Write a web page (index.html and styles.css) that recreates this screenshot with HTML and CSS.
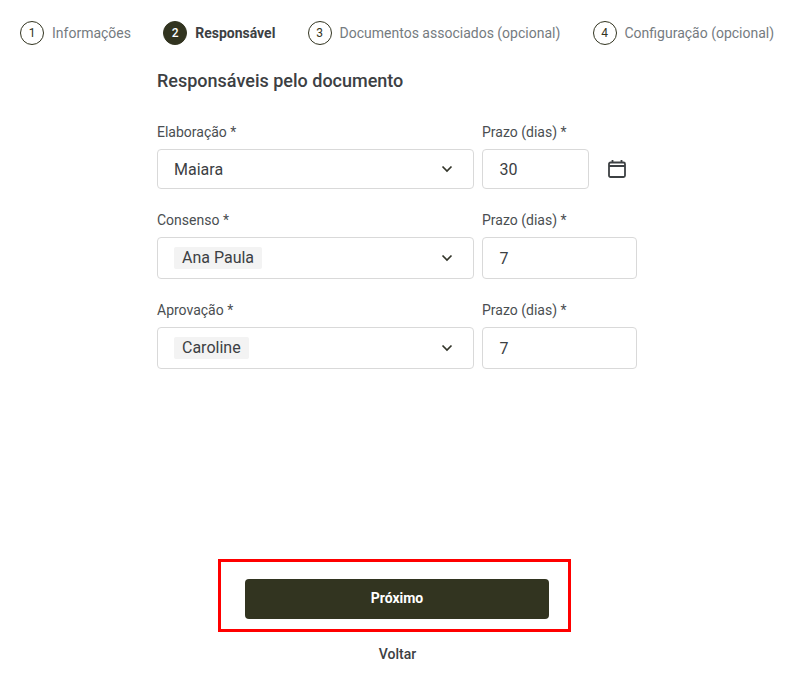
FILE: index.html
```html
<!DOCTYPE html>
<html lang="pt">
<head>
<meta charset="utf-8">
<title>Responsáveis pelo documento</title>
<link rel="stylesheet" href="styles.css">
</head>
<body>
<nav class="stepper">
  <div class="step"><span class="step-num">1</span><span class="step-label">Informações</span></div>
  <div class="step step-active"><span class="step-num">2</span><span class="step-label">Responsável</span></div>
  <div class="step"><span class="step-num">3</span><span class="step-label">Documentos associados (opcional)</span></div>
  <div class="step"><span class="step-num">4</span><span class="step-label">Configuração (opcional)</span></div>
</nav>
<main class="content">
  <h1 class="title">Responsáveis pelo documento</h1>
  <div class="row">
    <div class="col-select">
      <label class="label">Elaboração *</label>
      <div class="field field-select"><span class="value">Maiara</span>
        <svg class="chevron" viewBox="0 0 12 8" width="12" height="8"><path d="M1.5 1.5 6 6l4.5-4.5" fill="none" stroke="#33352a" stroke-width="1.7"/></svg>
      </div>
    </div>
    <div class="col-prazo">
      <label class="label">Prazo (dias) *</label>
      <div class="prazo-line">
        <div class="field field-short"><span class="value">30</span></div>
        <svg class="calendar" viewBox="0 0 18 18" width="18" height="18"><path d="M1 4A1.500 1.500 0 0 1 2.500 2.500h13A1.500 1.500 0 0 1 17 4v11.500a1.500 1.500 0 0 1-1.500 1.500h-13A1.500 1.500 0 0 1 1 15.500zM1 6h16M4.500 0v2.500M13.500 0v2.500" fill="none" stroke="#3c4043" stroke-width="1.800"/></svg>
      </div>
    </div>
  </div>
  <div class="row">
    <div class="col-select">
      <label class="label">Consenso *</label>
      <div class="field field-select field-tall"><span class="tag">Ana Paula</span>
        <svg class="chevron" viewBox="0 0 12 8" width="12" height="8"><path d="M1.5 1.5 6 6l4.5-4.5" fill="none" stroke="#33352a" stroke-width="1.7"/></svg>
      </div>
    </div>
    <div class="col-prazo">
      <label class="label">Prazo (dias) *</label>
      <div class="field field-tall field-num"><span class="value">7</span></div>
    </div>
  </div>
  <div class="row">
    <div class="col-select">
      <label class="label">Aprovação *</label>
      <div class="field field-select field-tall"><span class="tag">Caroline</span>
        <svg class="chevron" viewBox="0 0 12 8" width="12" height="8"><path d="M1.5 1.5 6 6l4.5-4.5" fill="none" stroke="#33352a" stroke-width="1.7"/></svg>
      </div>
    </div>
    <div class="col-prazo">
      <label class="label">Prazo (dias) *</label>
      <div class="field field-tall field-num"><span class="value">7</span></div>
    </div>
  </div>
</main>
<footer class="actions">
  <div class="highlight"><button class="btn-next" type="button">Próximo</button></div>
  <a class="back">Voltar</a>
</footer>
</body>
</html>
```
FILE: styles.css
```css
* { box-sizing: border-box; }
html, body { margin: 0; padding: 0; background: #fff; }
body {
  width: 796px;
  height: 684px;
  overflow: hidden;
  font-family: Roboto, "Liberation Sans", sans-serif;
  color: #3c4043;
}
.stepper {
  display: flex;
  gap: 32.2px;
  padding: 21px 0 0 20px;
  height: 45px;
  white-space: nowrap;
}
.step { display: flex; align-items: center; gap: 8px; height: 24px; }
.step-num {
  width: 24px;
  height: 24px;
  flex: none;
  display: flex;
  align-items: center;
  justify-content: center;
  border: 1px solid #323420;
  border-radius: 50%;
  font-size: 12px;
  color: #323420;
}
.step-label { font-size: 14px; color: #757b7f; line-height: 22px; }
.step-active .step-num { background: #323420; color: #fff; font-weight: 500; }
.step-active .step-label { color: #3c4043; font-weight: 700; }
.content { padding: 25px 0 0 157px; }
.title {
  margin: 0 0 30px;
  font-size: 18px;
  line-height: 22px;
  font-weight: 500;
  color: #3c4043;
}
.row { display: flex; gap: 8px; margin-bottom: 21px; }
.col-select { width: 317px; }
.col-prazo { width: 155px; }
.label {
  display: block;
  font-size: 14px;
  line-height: 20px;
  margin-bottom: 7px;
  color: #4a4e51;
}
.field {
  height: 40px;
  display: flex;
  align-items: center;
  padding: 0 16px;
  border: 1px solid #d9d9d9;
  border-radius: 4px;
  background: #fff;
  font-size: 16px;
  color: #3c4043;
}
.field-tall { height: 42px; }
.field-select { justify-content: space-between; }
.field-short { width: 107px; padding-left: 16.5px; }
.field-num { padding-left: 16.5px; }
.prazo-line { display: flex; align-items: center; gap: 19px; }
.calendar { flex: none; }
.tag {
  background: #f3f3f3;
  border-radius: 2px;
  padding: 0 8px;
  line-height: 22px;
}
.chevron { flex: none; margin-right: 4px; }
.actions {
  display: flex;
  flex-direction: column;
  align-items: flex-start;
  margin: 190px 0 0 218px;
  width: 353px;
}
.highlight {
  width: 353px;
  height: 73px;
  border: 3px solid #ff0000;
  padding: 17px 24px;
}
.btn-next {
  display: block;
  width: 304px;
  height: 40px;
  border: 0;
  border-radius: 4px;
  padding: 0 0 2px;
  background: #323420;
  color: #fff;
  font: 700 14px Roboto, "Liberation Sans", sans-serif;
}
.back {
  align-self: center;
  margin: 13px 0 0 6px;
  font-size: 14px;
  font-weight: 500;
  line-height: 18px;
  color: #3c4043;
}
```
